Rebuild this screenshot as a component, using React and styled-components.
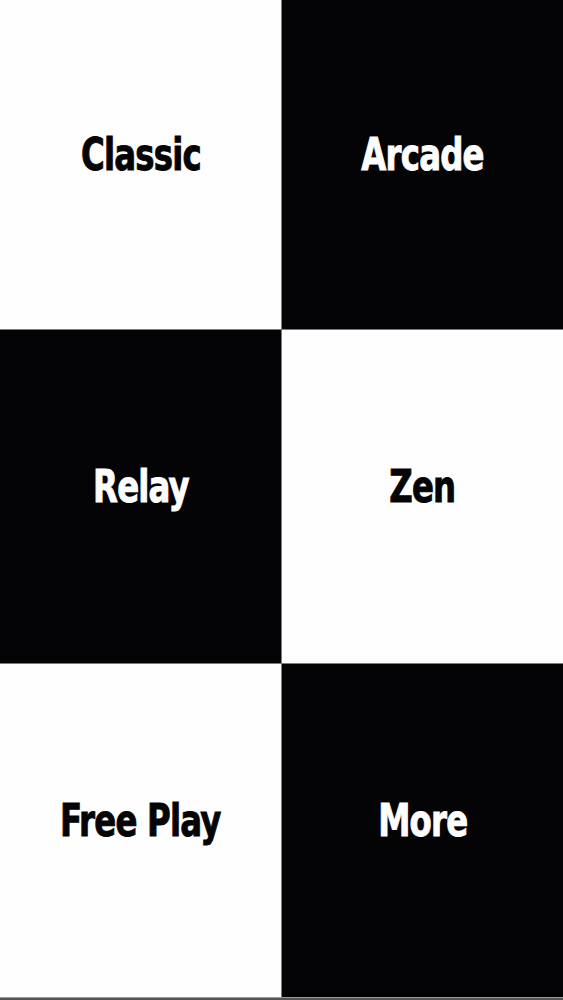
import React from "react";
import styled, { createGlobalStyle } from "styled-components";

const GlobalStyle = createGlobalStyle`
  html, body {
    margin: 0;
    padding: 0;
    background: #555;
  }
`;

const modes = [
  { label: "Classic", dark: false },
  { label: "Arcade", dark: true },
  { label: "Relay", dark: true },
  { label: "Zen", dark: false },
  { label: "Free Play", dark: false },
  { label: "More", dark: true },
];

const App = () => {
  return (
    <>
      <GlobalStyle />
      <Page>
        <Board>
          {modes.map((m) => (
            <Tile key={m.label} $dark={m.dark}>
              <Label>{m.label}</Label>
            </Tile>
          ))}
        </Board>
        <BottomBar />
      </Page>
    </>
  );
};

const Page = styled.div`
  width: 563px;
  height: 1000px;
  display: flex;
  flex-direction: column;
  overflow: hidden;
`;

const Board = styled.div`
  display: grid;
  grid-template-columns: 281px 281px;
  grid-template-rows: 329px 333px 333px;
  gap: 1px;
  background: #7b7b7b;
`;

const Tile = styled.div`
  background: ${(p) => (p.$dark ? "#040306" : "#fefefe")};
  color: ${(p) => (p.$dark ? "#fdfdfd" : "#050505")};
  display: flex;
  align-items: center;
  justify-content: center;
  padding-bottom: 20px;
  box-sizing: border-box;
`;

const Label = styled.span`
  display: inline-block;
  font-family: "DejaVu Sans Condensed", "DejaVu Sans", sans-serif;
  font-weight: 700;
  font-size: 45px;
  letter-spacing: -1px;
  -webkit-text-stroke: 0.9px currentColor;
  transform: scaleX(0.8);
  white-space: nowrap;
`;

const BottomBar = styled.div`
  flex: 1;
  background: #555;
  border-top: 1px solid #9a9a9a;
`;

export default App;
